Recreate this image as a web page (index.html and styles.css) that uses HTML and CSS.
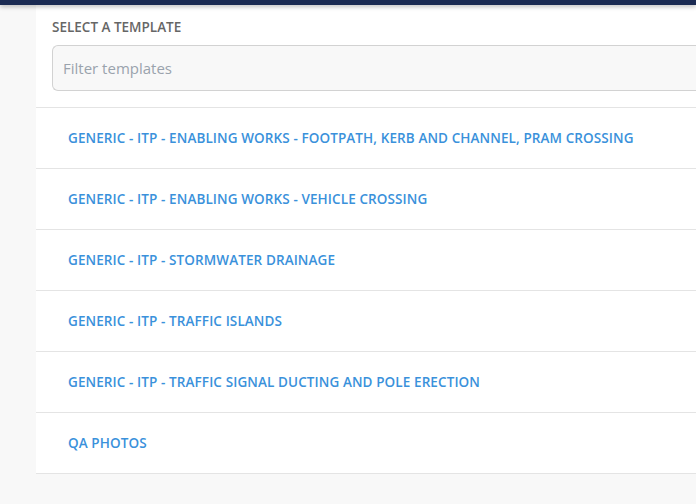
FILE: index.html
```html
<!DOCTYPE html>
<html>
<head>
<meta charset="utf-8">
<link rel="stylesheet" href="styles.css">
</head>
<body>
<div class="topbar"></div>
<div class="panel">
  <div class="panel-head">
    <div class="title">SELECT A TEMPLATE</div>
    <input class="filter" type="text" placeholder="Filter templates">
  </div>
  <ul class="list">
    <li class="item">GENERIC - ITP - ENABLING WORKS - FOOTPATH, KERB AND CHANNEL, PRAM CROSSING</li>
    <li class="item">GENERIC - ITP - ENABLING WORKS - VEHICLE CROSSING</li>
    <li class="item">GENERIC - ITP - STORMWATER DRAINAGE</li>
    <li class="item">GENERIC - ITP - TRAFFIC ISLANDS</li>
    <li class="item">GENERIC - ITP - TRAFFIC SIGNAL DUCTING AND POLE ERECTION</li>
    <li class="item">QA PHOTOS</li>
  </ul>
</div>
</body>
</html>
```

FILE: styles.css
```css
html, body {
  margin: 0;
  padding: 0;
  background: #f8f8f8;
  font-family: "Open Sans", "Noto Sans", sans-serif;
  overflow: hidden;
}
.topbar {
  height: 5px;
  background: #1a2a52;
  box-shadow: 0 2px 4px rgba(0,0,0,0.25);
  position: relative;
  z-index: 2;
}
.panel {
  margin-left: 36px;
  background: #fff;
}
.panel-head {
  padding: 13px 0 16px 16px;
  border-bottom: 1px solid #e4e4e4;
}
.title {
  font-size: 13.5px;
  font-weight: 600;
  color: #666;
  line-height: 18px;
  margin-bottom: 9px;
}
.filter {
  display: block;
  box-sizing: border-box;
  width: 100%;
  height: 46px;
  border: 1px solid #d2d2d2;
  border-right: none;
  border-radius: 6px 0 0 6px;
  background: #f8f8f8;
  padding: 0 10px;
  font-family: inherit;
  font-size: 15px;
  color: #333;
  outline: none;
}
.filter::placeholder {
  color: #9aa3ad;
}
.list {
  list-style: none;
  margin: 0;
  padding: 0;
}
.item {
  box-sizing: border-box;
  height: 61px;
  display: flex;
  align-items: center;
  padding: 0 0 0 32px;
  border-bottom: 1px solid #e4e4e4;
  font-size: 13.5px;
  letter-spacing: 0.1px;
  font-weight: 600;
  color: #3a91db;
}
```
